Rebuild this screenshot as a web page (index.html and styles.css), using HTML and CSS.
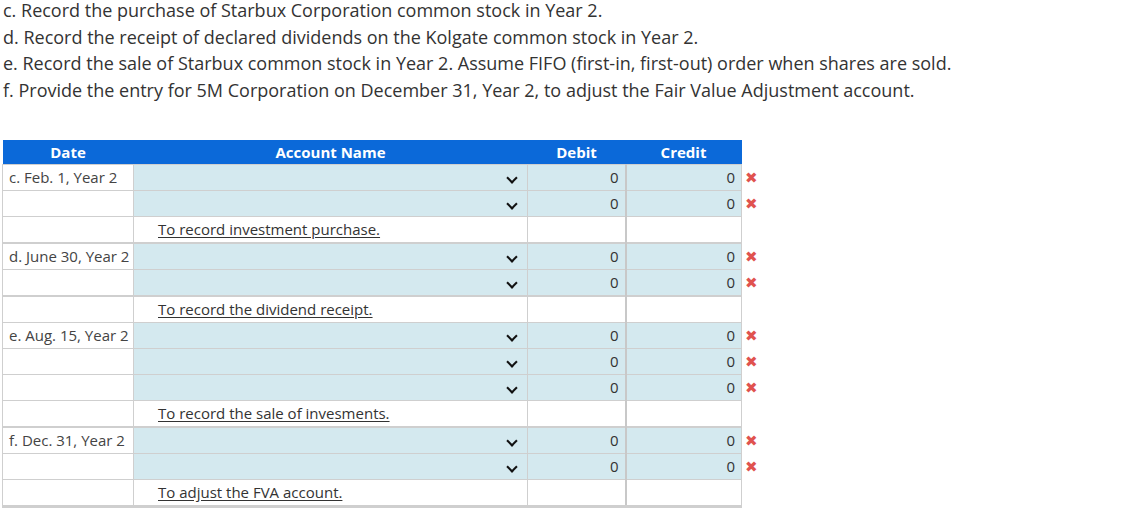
FILE: index.html
```html
<!DOCTYPE html>
<html>
<head>
<meta charset="utf-8">
<link rel="stylesheet" href="styles.css">
</head>
<body>
<div class="prompt">
  <p>c. Record the purchase of Starbux Corporation common stock in Year 2.</p>
  <p>d. Record the receipt of declared dividends on the Kolgate common stock in Year 2.</p>
  <p>e. Record the sale of Starbux common stock in Year 2. Assume FIFO (first-in, first-out) order when shares are sold.</p>
  <p>f. Provide the entry for 5M Corporation on December 31, Year 2, to adjust the Fair Value Adjustment account.</p>
</div>

<table class="journal">
  <colgroup>
    <col class="c-date"><col class="c-acct"><col class="c-deb"><col class="c-cred"><col class="c-mark">
  </colgroup>
  <thead>
    <tr><th>Date</th><th>Account Name</th><th>Debit</th><th>Credit</th><th class="mark"></th></tr>
  </thead>
  <tbody>
    <tr><td class="date">c. Feb. 1, Year 2</td><td class="acct"><span class="chev"></span></td><td class="num">0</td><td class="num cred">0</td><td class="mark"><span class="x">&#10006;</span></td></tr>
    <tr><td class="date"></td><td class="acct"><span class="chev"></span></td><td class="num">0</td><td class="num cred">0</td><td class="mark"><span class="x">&#10006;</span></td></tr>
    <tr class="memo"><td class="date"></td><td class="note"><u>To record investment purchase.</u></td><td class="blank"></td><td class="blank cred"></td><td class="mark"></td></tr>

    <tr class="grp"><td class="date">d. June 30, Year 2</td><td class="acct"><span class="chev"></span></td><td class="num">0</td><td class="num cred">0</td><td class="mark"><span class="x">&#10006;</span></td></tr>
    <tr><td class="date"></td><td class="acct"><span class="chev"></span></td><td class="num">0</td><td class="num cred">0</td><td class="mark"><span class="x">&#10006;</span></td></tr>
    <tr class="memo grp"><td class="date"></td><td class="note"><u>To record the dividend receipt.</u></td><td class="blank"></td><td class="blank cred"></td><td class="mark"></td></tr>

    <tr><td class="date">e. Aug. 15, Year 2</td><td class="acct"><span class="chev"></span></td><td class="num">0</td><td class="num cred">0</td><td class="mark"><span class="x">&#10006;</span></td></tr>
    <tr><td class="date"></td><td class="acct"><span class="chev"></span></td><td class="num">0</td><td class="num cred">0</td><td class="mark"><span class="x">&#10006;</span></td></tr>
    <tr><td class="date"></td><td class="acct"><span class="chev"></span></td><td class="num">0</td><td class="num cred">0</td><td class="mark"><span class="x">&#10006;</span></td></tr>
    <tr class="memo"><td class="date"></td><td class="note"><u>To record the sale of invesments.</u></td><td class="blank"></td><td class="blank cred"></td><td class="mark"></td></tr>

    <tr class="grp"><td class="date">f. Dec. 31, Year 2</td><td class="acct"><span class="chev"></span></td><td class="num">0</td><td class="num cred">0</td><td class="mark"><span class="x">&#10006;</span></td></tr>
    <tr><td class="date"></td><td class="acct"><span class="chev"></span></td><td class="num">0</td><td class="num cred">0</td><td class="mark"><span class="x">&#10006;</span></td></tr>
    <tr class="memo last"><td class="date"></td><td class="note"><u>To adjust the FVA account.</u></td><td class="blank"></td><td class="blank cred"></td><td class="mark"></td></tr>
  </tbody>
</table>
</body>
</html>
```

FILE: styles.css
```css
html, body {
  margin: 0;
  padding: 0;
  background: #fff;
}
body {
  font-family: "Open Sans", "DejaVu Sans", sans-serif;
  color: #333;
}
.prompt {
  margin: -3px 0 0 3px;
  font-size: 18px;
  line-height: 26.7px;
}
.prompt p {
  margin: 0;
}
.journal {
  margin: 36px 0 0 2px;
  border-collapse: collapse;
  table-layout: fixed;
  font-size: 15px;
}
.c-date { width: 131px; }
.c-acct { width: 394px; }
.c-deb { width: 98px; }
.c-cred { width: 116px; }
.c-mark { width: 24px; }

.journal th {
  background: #0b69d9;
  color: #fff;
  font-weight: 700;
  font-size: 15px;
  height: 24px;
  padding: 0;
  text-align: center;
  line-height: 24px;
}
.journal th.mark {
  background: transparent;
}
.journal td {
  height: 25px;
  padding: 0;
  border: 1px solid #cfcfcf;
  line-height: 25px;
  white-space: nowrap;
}
.journal td.date {
  padding-left: 6px;
  background: #fff;
  color: #444;
}
.journal td.acct {
  background: #d4e9ef;
  position: relative;
}
.chev {
  position: absolute;
  right: 11px;
  top: 9px;
  width: 6px;
  height: 6px;
  border-right: 2px solid #111;
  border-bottom: 2px solid #111;
  transform: rotate(45deg);
}
.journal td.num {
  background: #d4e9ef;
  text-align: right;
  padding-right: 6px;
  color: #333;
}
.journal td.cred {
  border-left: 2px solid #c8c8c8;
}
.journal td.blank {
  background: #fff;
}
.journal td.note {
  background: #fff;
  padding-left: 24px;
  color: #333;
}
.journal td.note u {
  text-decoration-color: #333;
  text-underline-offset: 2px;
}
.journal td.mark {
  border: none;
  background: transparent;
  padding-left: 3px;
}
.x {
  color: #e0524f;
  font-size: 15px;
  font-weight: 700;
}
.journal tr.grp td:not(.mark) {
  border-top: 2px solid #cfcfcf;
}
.journal tr.last td:not(.mark) {
  border-bottom: 3px solid #cfcfcf;
}
```
